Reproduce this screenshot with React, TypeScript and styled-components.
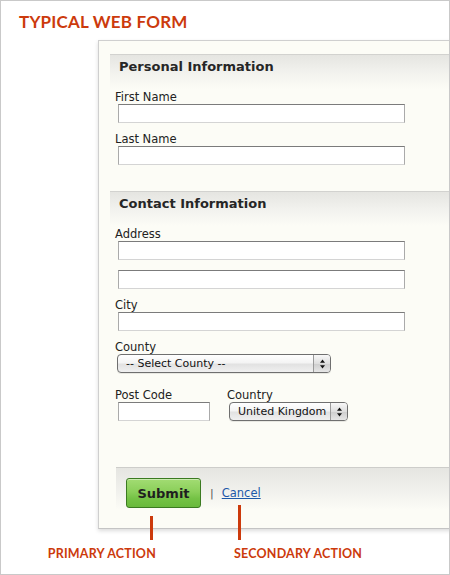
import React from 'react'
import styled, { createGlobalStyle } from 'styled-components'

const GlobalStyle = createGlobalStyle`
  html, body {
    margin: 0;
    padding: 0;
    background: #ffffff;
  }
  * {
    box-sizing: border-box;
  }
`

const Frame = styled.div`
  width: 450px;
  height: 575px;
  border: 1px solid #c9c9c9;
  background: #ffffff;
  overflow: hidden;
  font-family: "DejaVu Sans", Verdana, sans-serif;
  color: #222;
`

const Title = styled.h1`
  margin: 0;
  padding: 11px 0 0 18px;
  font-family: Lato, "Liberation Sans", sans-serif;
  font-weight: 700;
  font-size: 17px;
  line-height: 20px;
  letter-spacing: 0.2px;
  color: #cc3a0c;
`

const Panel = styled.form`
  margin: 8px -20px 0 97px;
  padding: 13px 0 0 11px;
  background: #fcfcf6;
  border-top: 1px solid #cfcfcf;
  border-left: 1px solid #cfcfcf;
  border-bottom: 1px solid #c4c4c4;
  box-shadow: 0 2px 4px rgba(0, 0, 0, 0.14);
`

const Section = styled.fieldset<{ gapBelow: number }>`
  margin: 0 0 ${({ gapBelow }) => gapBelow}px 0;
  padding: 0;
  border: none;
  border-top: 1px solid #d2d2cf;
  background: linear-gradient(#e5e5e1 0px, #f1f1ed 16px, #fcfcf6 34px);
`

const SectionTitle = styled.h2`
  margin: 0;
  padding: 4px 0 15px 9px;
  font-size: 13px;
  line-height: 16px;
  font-weight: 700;
  color: #262626;
`

const Fields = styled.div`
  padding-left: 5px;
`

const Field = styled.div<{ extra?: number }>`
  margin-bottom: ${({ extra = 0 }) => 9 + extra}px;
`

const Row = styled.div`
  display: flex;
  gap: 17px;
`

const Label = styled.label`
  display: block;
  font-size: 11.5px;
  line-height: 14px;
  color: #222;
`

const TextInput = styled.input<{ w: number }>`
  display: block;
  width: ${({ w }) => w}px;
  height: 19px;
  margin: 0 0 0 3px;
  padding: 0 3px;
  background: #fff;
  border: 1px solid #aaaaaa;
  border-top-color: #7b7b7b;
  border-bottom-color: #d4d4d4;
  font: 11px "DejaVu Sans", Verdana, sans-serif;
  outline: none;
`

const StackedInput = styled(TextInput)`
  margin-top: 10px;
`

const SelectWrap = styled.div<{ w: number }>`
  display: flex;
  width: ${({ w }) => w}px;
  height: 19px;
  margin-left: 2px;
  border: 1px solid #6f6f6f;
  border-radius: 4px;
  background: linear-gradient(#ffffff, #f4f4f4 45%, #e2e2e2 55%, #f0f0f0);
  box-shadow: 0 1px 0 rgba(0, 0, 0, 0.08);
  overflow: hidden;
`

const SelectField = styled.select`
  flex: 1;
  min-width: 0;
  appearance: none;
  -webkit-appearance: none;
  border: none;
  background: transparent;
  padding: 0 0 0 8px;
  font: 11px "DejaVu Sans", Verdana, sans-serif;
  color: #111;
  outline: none;
`

const ArrowCell = styled.div`
  width: 17px;
  display: flex;
  align-items: center;
  justify-content: center;
  border-left: 1px solid #9a9a9a;
  background: linear-gradient(#f8f8f8, #dedede 50%, #cfcfcf 55%, #e6e6e6);
`

const Footer = styled.div`
  margin-left: 6px;
  padding: 10px 0 20px 10px;
  border-top: 1px solid #cdcdca;
  background: linear-gradient(#e5e5e1 0px, #efefeb 20px, #fcfcf6 42px);
  display: flex;
  align-items: center;
`

const SubmitButton = styled.button`
  width: 75px;
  height: 30px;
  border: 1px solid #3b7a21;
  border-radius: 3px;
  background: linear-gradient(#a2dc73, #8bcf5a 45%, #74c245 70%, #69b93c);
  box-shadow: inset 0 1px 0 rgba(255, 255, 255, 0.45);
  font: 700 13px "DejaVu Sans", Verdana, sans-serif;
  color: #1f1f1f;
  padding: 0;
  cursor: pointer;
`

const Divider = styled.span`
  margin: 0 8px 0 9px;
  font-size: 11px;
  color: #555;
`

const CancelLink = styled.a`
  font-size: 11.5px;
  color: #1d58a8;
  text-decoration: underline;
`

const Callouts = styled.div`
  position: relative;
  display: flex;
  margin-top: -24px;
  padding-left: 47px;
`

const Callout = styled.div<{ align: 'start' | 'end'; w?: number }>`
  display: flex;
  flex-direction: column;
  align-items: ${({ align }) => (align === 'end' ? 'flex-end' : 'flex-start')};
  width: ${({ w }) => (w ? w + 'px' : 'auto')};
  margin-left: ${({ align }) => (align === 'start' ? '78px' : '0')};
`

const CalloutLine = styled.div<{ offset: number; len: number; side: 'start' | 'end' }>`
  width: 3px;
  height: ${({ len }) => len}px;
  margin-top: ${({ offset }) => offset}px;
  margin-left: ${({ side }) => (side === 'start' ? '4px' : '0')};
  margin-right: ${({ side }) => (side === 'end' ? '3px' : '0')};
  background: #cc3a0c;
`

const CalloutText = styled.div`
  margin-top: 7px;
  white-space: nowrap;
  font-family: Lato, "Liberation Sans", sans-serif;
  font-weight: 700;
  font-size: 12.5px;
  line-height: 14px;
  letter-spacing: 0.2px;
  color: #cc3a0c;
`

function UpDown() {
  return (
    <svg width="7" height="10" viewBox="0 0 7 10">
      <path d="M3.5 0.5 L6 3.8 L1 3.8 Z" fill="#111" />
      <path d="M3.5 9.5 L6 6.2 L1 6.2 Z" fill="#111" />
    </svg>
  )
}

function Select({ width, options }: { width: number; options: string[] }) {
  return (
    <SelectWrap w={width}>
      <SelectField defaultValue={options[0]}>
        {options.map((o) => (
          <option key={o}>{o}</option>
        ))}
      </SelectField>
      <ArrowCell>
        <UpDown />
      </ArrowCell>
    </SelectWrap>
  )
}

export default function App() {
  return (
    <>
      <GlobalStyle />
      <Frame>
        <Title>TYPICAL WEB FORM</Title>
        <Panel onSubmit={(e) => e.preventDefault()}>
          <Section gapBelow={17}>
            <SectionTitle>Personal Information</SectionTitle>
            <Fields>
              <Field>
                <Label>First Name</Label>
                <TextInput w={287} />
              </Field>
              <Field>
                <Label>Last Name</Label>
                <TextInput w={287} />
              </Field>
            </Fields>
          </Section>
          <Section gapBelow={37}>
            <SectionTitle>Contact Information</SectionTitle>
            <Fields>
              <Field>
                <Label>Address</Label>
                <TextInput w={287} />
                <StackedInput w={287} />
              </Field>
              <Field>
                <Label>City</Label>
                <TextInput w={287} />
              </Field>
              <Field extra={6}>
                <Label>County</Label>
                <Select width={214} options={['-- Select County --']} />
              </Field>
              <Row>
                <Field>
                  <Label>Post Code</Label>
                  <TextInput w={92} />
                </Field>
                <Field>
                  <Label>Country</Label>
                  <Select width={119} options={['United Kingdom']} />
                </Field>
              </Row>
            </Fields>
          </Section>
          <Footer>
            <SubmitButton type="submit">Submit</SubmitButton>
            <Divider>|</Divider>
            <CancelLink href="#">Cancel</CancelLink>
          </Footer>
        </Panel>
        <Callouts>
          <Callout align="end" w={108}>
            <CalloutLine offset={11} len={24} side="end" />
            <CalloutText>PRIMARY ACTION</CalloutText>
          </Callout>
          <Callout align="start">
            <CalloutLine offset={0} len={35} side="start" />
            <CalloutText>SECONDARY ACTION</CalloutText>
          </Callout>
        </Callouts>
      </Frame>
    </>
  )
}
